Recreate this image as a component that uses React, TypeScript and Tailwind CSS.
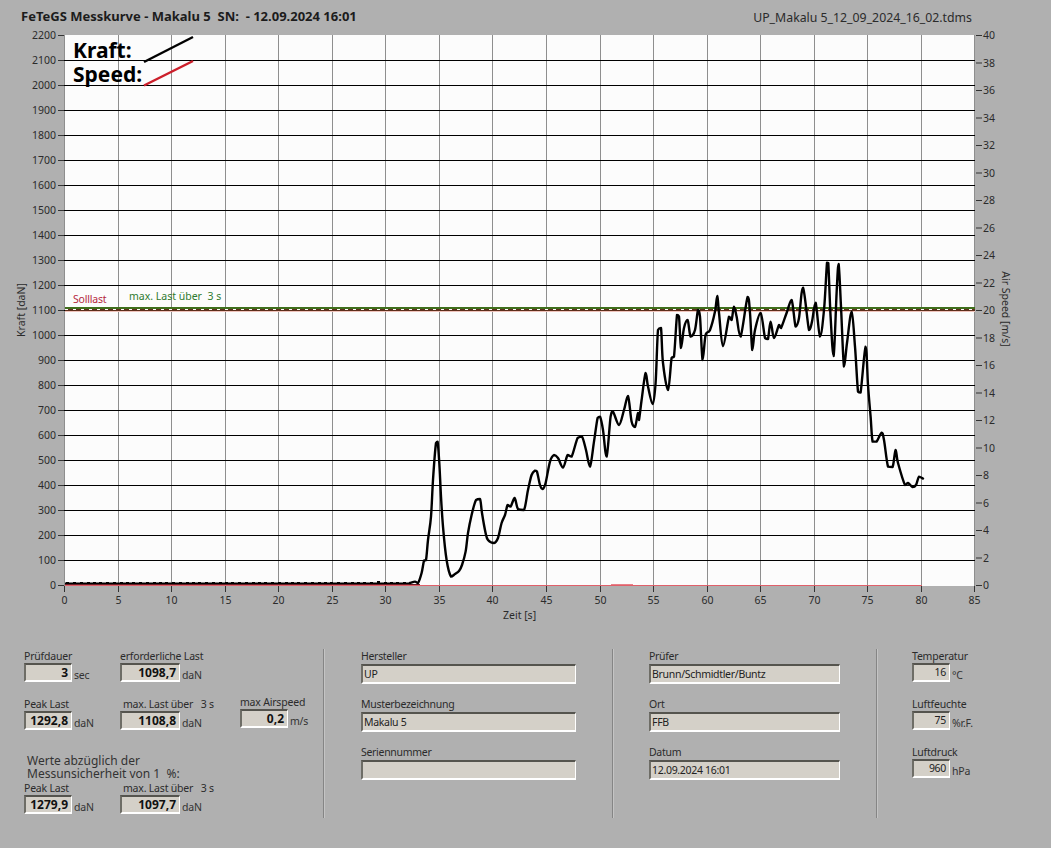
import { ReactNode } from 'react';

// curve points read off the plot, in page pixels
const peaks: [number, number][] = [
  [410, 583], [415, 581.6], [418, 583], [421.6, 573], [424, 560.6], [426, 560], [428, 540], [431, 516.6], [433, 480], [436, 443], [437.6, 441.6], [439.3, 463], [441, 496.6], [443, 526.6], [446.6, 560], [451, 576.6], [455, 574], [459, 571], [462, 565], [465.6, 551.6], [468, 533], [471.6, 515], [476, 500], [480, 499], [482, 513], [485.6, 533], [488, 540], [494, 543], [498, 538], [501.6, 523], [505, 515], [507.6, 505], [510.6, 506.6], [514.6, 498], [518, 509], [524, 510], [528, 490], [531.6, 475], [535, 470.6], [537, 471.6], [540, 485], [542.6, 489], [545.6, 483], [550, 461.6], [554, 455], [558, 458], [563, 467.6], [567.6, 455], [571.6, 456.6], [577.6, 438], [582, 436.6], [586, 450], [590, 466.6], [594, 441.6], [597.6, 418], [600, 416.6], [603, 430], [606.6, 456.6], [610.6, 416.6], [613, 411.6], [619, 425], [624, 410], [628, 396], [631.6, 421.6], [635, 427], [638, 413], [639, 420], [641.6, 400], [645.6, 373], [648, 386.6], [652.6, 404], [655.6, 383], [658, 330], [661, 328], [663, 363], [668, 390], [671.6, 358], [674, 356.6], [677, 315], [679, 316.6], [681, 348], [684, 328], [687.6, 320], [690.6, 336.6], [695, 330], [698, 310], [700, 316.6], [702.6, 360], [705.6, 335], [710, 330], [715, 311.6], [717.3, 296], [719, 313], [723, 346], [729, 316.6], [731.6, 320], [734, 306.6], [736.6, 316.6], [740.6, 336.6], [747.6, 297], [750, 313], [752.3, 350], [755, 330], [760.6, 313], [765, 338], [768, 339], [770.6, 321.6], [774, 338], [779, 325], [781, 328], [786.6, 313], [791.6, 300], [795.6, 326.6], [799, 318], [803, 287.6], [809, 330], [812, 321.6], [815.6, 302.6], [820, 336.6], [824, 310], [827, 262.6], [828.3, 263], [830.6, 316.6], [833.6, 356], [836.6, 293], [838.6, 264], [841, 306.6], [844, 366.6], [847, 343], [851.6, 311.6], [855, 346.6], [858, 391.6], [860.6, 392.6], [865.6, 346.6], [868, 385], [870.6, 416.6], [872.6, 441.6], [876.6, 441.6], [881.6, 432.6], [884, 440], [888, 466.6], [892.6, 467], [895.6, 450], [898, 463], [905, 485], [908, 483], [912.6, 487], [916, 485], [919, 476.6], [923, 478.6],
];

const clamp = (v: number, a: number, b: number) => Math.min(Math.max(v, Math.min(a, b)), Math.max(a, b));

// catmull-rom through the points, controls held inside each segment so peaks don't overshoot
function smooth(pts: [number, number][]) {
  let d = `M${pts[0][0]} ${pts[0][1]}`;
  for (let i = 0; i < pts.length - 1; i++) {
    const p0 = pts[Math.max(i - 1, 0)];
    const p1 = pts[i];
    const p2 = pts[i + 1];
    const p3 = pts[Math.min(i + 2, pts.length - 1)];
    const c1x = p1[0] + (p2[0] - p0[0]) / 6;
    const c1y = clamp(p1[1] + (p2[1] - p0[1]) / 6, p1[1], p2[1]);
    const c2x = p2[0] - (p3[0] - p1[0]) / 6;
    const c2y = clamp(p2[1] - (p3[1] - p1[1]) / 6, p1[1], p2[1]);
    d += ` C${c1x.toFixed(1)} ${c1y.toFixed(1)} ${c2x.toFixed(1)} ${c2y.toFixed(1)} ${p2[0]} ${p2[1]}`;
  }
  return d;
}

// flat noisy start of the measurement: a base line with short clumps
const spikes: number[] = [];
for (let x = 65; x < 410; x += 1) {
  if ((Math.floor(x / 3) * 13 + x) % 11 < 5) spikes.push(x);
}
const spikePath = spikes.map((x) => `M${x + 0.5} ${x > 372 && x < 382 ? 581 : 582}V584`).join('');

const toY = (v: number) => 585.5 - v * 0.25;
const toX = (t: number) => Math.round(64 + t * 10.71) + 0.5;
const kraftTicks = Array.from({ length: 23 }, (_, i) => i * 100);
const speedTicks = Array.from({ length: 21 }, (_, i) => i * 2);
const zeitTicks = Array.from({ length: 18 }, (_, i) => i * 5);

function Chart() {
  return (
    <svg width="1051" height="600" viewBox="0 28 1051 600" className="block" fontFamily="'Noto Sans', sans-serif">
      <rect x="64" y="35" width="911" height="551" fill="#fcfcfc" />
      {zeitTicks.map((t) => (
        <g key={t}>
          <line x1={toX(t)} x2={toX(t)} y1="35" y2="586" stroke="#8e8e8e" />
          <line x1={toX(t)} x2={toX(t)} y1="586" y2="592" stroke="#333" />
          <text x={toX(t)} y="604" textAnchor="middle" fontSize="10.5" fill="#2b2b2b">{t}</text>
        </g>
      ))}
      {kraftTicks.map((v) => (
        <g key={v}>
          {v > 0 && v < 2200 && <line x1="64" x2="975" y1={toY(v)} y2={toY(v)} stroke="#000" />}
          <line x1="58" x2="64" y1={toY(v)} y2={toY(v)} stroke="#333" />
          <text x="56" y={toY(v) + 3.5} textAnchor="end" fontSize="10.5" fill="#2b2b2b">{v}</text>
        </g>
      ))}
      {speedTicks.map((v) => (
        <g key={v}>
          <line x1="976" x2="982" y1={585.5 - v * 13.75} y2={585.5 - v * 13.75} stroke="#333" />
          <text x="983" y={585.5 - v * 13.75 + 3.5} fontSize="10.5" fill="#2b2b2b">{v}</text>
        </g>
      ))}

      {/* limit lines */}
      <line x1="65" x2="975" y1="308" y2="308" stroke="#3f6f1c" strokeWidth="2" />
      <line x1="65" x2="975" y1="310" y2="310" stroke="#5e2f1c" strokeWidth="2" />
      <line x1="65" x2="975" y1="309.5" y2="309.5" stroke="#ffffff" strokeDasharray="3 5" />
      <line x1="65" x2="975" y1="311.5" y2="311.5" stroke="#f0c4bc" />

      {/* speed trace along the floor */}
      <line x1="65" x2="922" y1="585.5" y2="585.5" stroke="#e0606a" />
      <line x1="65" x2="420" y1="584.5" y2="584.5" stroke="#6a1c24" />
      <line x1="611" x2="633" y1="584.5" y2="584.5" stroke="#e88088" />

      <line x1="65" x2="410" y1="583.25" y2="583.25" stroke="#000" strokeWidth="1.5" />
      <path d={spikePath} stroke="#000" fill="none" />
      <path d={smooth(peaks)} fill="none" stroke="#000" strokeWidth="2.4" strokeLinejoin="round" strokeLinecap="round" />

      {/* legend */}
      <text x="73" y="58" fontSize="21" fontWeight="700" fill="#000">Kraft:</text>
      <text x="73" y="82" fontSize="21" fontWeight="700" fill="#000">Speed:</text>
      <line x1="144" y1="62" x2="193" y2="37" stroke="#000" strokeWidth="2.4" />
      <line x1="144" y1="85.5" x2="193" y2="61" stroke="#cc1f2b" strokeWidth="2.4" />

      <text x="73" y="303" fontSize="10.5" fill="#b5283c" letterSpacing="-0.2">Solllast</text>
      <text x="129" y="300" fontSize="10.5" fill="#2f7a30" xmlSpace="preserve">max. Last über  3 s</text>

      <text x="503" y="619" fontSize="10.5" fill="#2b2b2b">Zeit [s]</text>
      <text transform="translate(25 310) rotate(-90)" textAnchor="middle" fontSize="10.5" fill="#2b2b2b">Kraft [daN]</text>
      <text transform="translate(1002 309) rotate(90)" textAnchor="middle" fontSize="10.5" fill="#2b2b2b">Air Speed [m/s]</text>
    </svg>
  );
}

function Box({ w, h = 'h-[19px]', bold, right, children }: { w: string; h?: string; bold?: boolean; right?: boolean; children?: ReactNode }) {
  return (
    <div
      className={`${w} ${h} flex items-center border-t-2 border-l-2 border-r border-b-2 border-t-[#55544e] border-l-[#6e6d66] border-r-white border-b-white bg-[#d4d0c8] leading-none ${right ? 'justify-end pr-[3px]' : 'pl-[1px]'} ${bold ? 'text-[12px] font-bold text-[#111]' : 'text-[10.5px] tracking-[-0.3px] text-[#222]'}`}
    >
      {children}
    </div>
  );
}

function NumField({ label, value, unit, w = 'w-[48px]', bold = true, labelClass = '' }: { label: string; value: string; unit: string; w?: string; bold?: boolean; labelClass?: string }) {
  return (
    <div className="flex flex-col">
      <div className={`h-[14px] whitespace-pre text-[10.5px] leading-[14px] tracking-[-0.2px] text-[#2b2b2b] ${labelClass}`}>{label}</div>
      <div className="flex items-end gap-[2px]">
        <Box w={w} bold={bold} right>{value}</Box>
        <span className="text-[10.5px] leading-[14px] tracking-[-0.2px] text-[#333]">{unit}</span>
      </div>
    </div>
  );
}

function TextField({ label, value }: { label: string; value?: string }) {
  return (
    <div className="flex flex-col">
      <div className="mb-[1px] h-[14px] text-[10.5px] leading-[14px] tracking-[-0.3px] text-[#2b2b2b]">{label}</div>
      <Box w="w-full" h="h-[20px]">{value}</Box>
    </div>
  );
}

function Divider() {
  return <div className="h-[169px] w-[2px] shrink-0 border-l border-r border-l-[#858585] border-r-[#c4c4c4]" />;
}

export default function App() {
  return (
    <div className="h-[848px] w-[1051px] overflow-hidden bg-[#b0b0b0] font-['Noto_Sans',sans-serif]">
      <div className="flex h-[28px] items-end justify-between pl-[21px] pr-[79px]">
        <div className="whitespace-pre pb-[1px] text-[13px] font-bold leading-[22px] text-[#1c1c1c]">FeTeGS Messkurve - Makalu 5  SN:  - 12.09.2024 16:01</div>
        <div className="text-[12.3px] leading-[20px] text-[#2b2b2b]">UP_Makalu 5_12_09_2024_16_02.tdms</div>
      </div>

      <Chart />

      <div className="flex pt-[21px]">
        <div className="flex w-[323px] flex-col pl-[24px]">
          <div className="flex">
            <div className="w-[96px]"><NumField label="Prüfdauer" value="3" unit="sec" /></div>
            <NumField label="erforderliche Last" value="1098,7" unit="daN" w="w-[60px]" />
          </div>
          <div className="mt-[15px] flex">
            <div className="w-[96px]"><NumField label="Peak Last" value="1292,8" unit="daN" /></div>
            <div className="w-[120px]"><NumField label="max. Last über   3 s" value="1108,8" unit="daN" w="w-[60px]" labelClass="pl-[3px]" /></div>
            <div className="-mt-[2px]"><NumField label="max Airspeed" value="0,2" unit="m/s" /></div>
          </div>
          <div className="mb-[1px] mt-[24px] pl-[3px] text-[12px] leading-[13px] text-[#333]">
            <div>Werte abzüglich der</div>
            <div className="whitespace-pre">Messunsicherheit von 1  %:</div>
          </div>
          <div className="flex">
            <div className="w-[96px]"><NumField label="Peak Last" value="1279,9" unit="daN" /></div>
            <NumField label="max. Last über   3 s" value="1097,7" unit="daN" w="w-[60px]" labelClass="pl-[3px]" />
          </div>
        </div>
        <Divider />

        <div className="flex w-[287px] flex-col gap-[13px] pl-[36px] pr-[36px]">
          <TextField label="Hersteller" value="UP" />
          <TextField label="Musterbezeichnung" value="Makalu 5" />
          <TextField label="Seriennummer" />
        </div>
        <Divider />

        <div className="flex w-[262px] flex-col gap-[13px] pl-[35px] pr-[36px]">
          <TextField label="Prüfer" value="Brunn/Schmidtler/Buntz" />
          <TextField label="Ort" value="FFB" />
          <TextField label="Datum" value="12.09.2024 16:01" />
        </div>
        <Divider />

        <div className="flex flex-col gap-[15px] pl-[34px]">
          <NumField label="Temperatur" value="16" unit="°C" w="w-[38px]" bold={false} />
          <NumField label="Luftfeuchte" value="75" unit="%r.F." w="w-[38px]" bold={false} />
          <NumField label="Luftdruck" value="960" unit="hPa" w="w-[38px]" bold={false} />
        </div>
      </div>
    </div>
  );
}
